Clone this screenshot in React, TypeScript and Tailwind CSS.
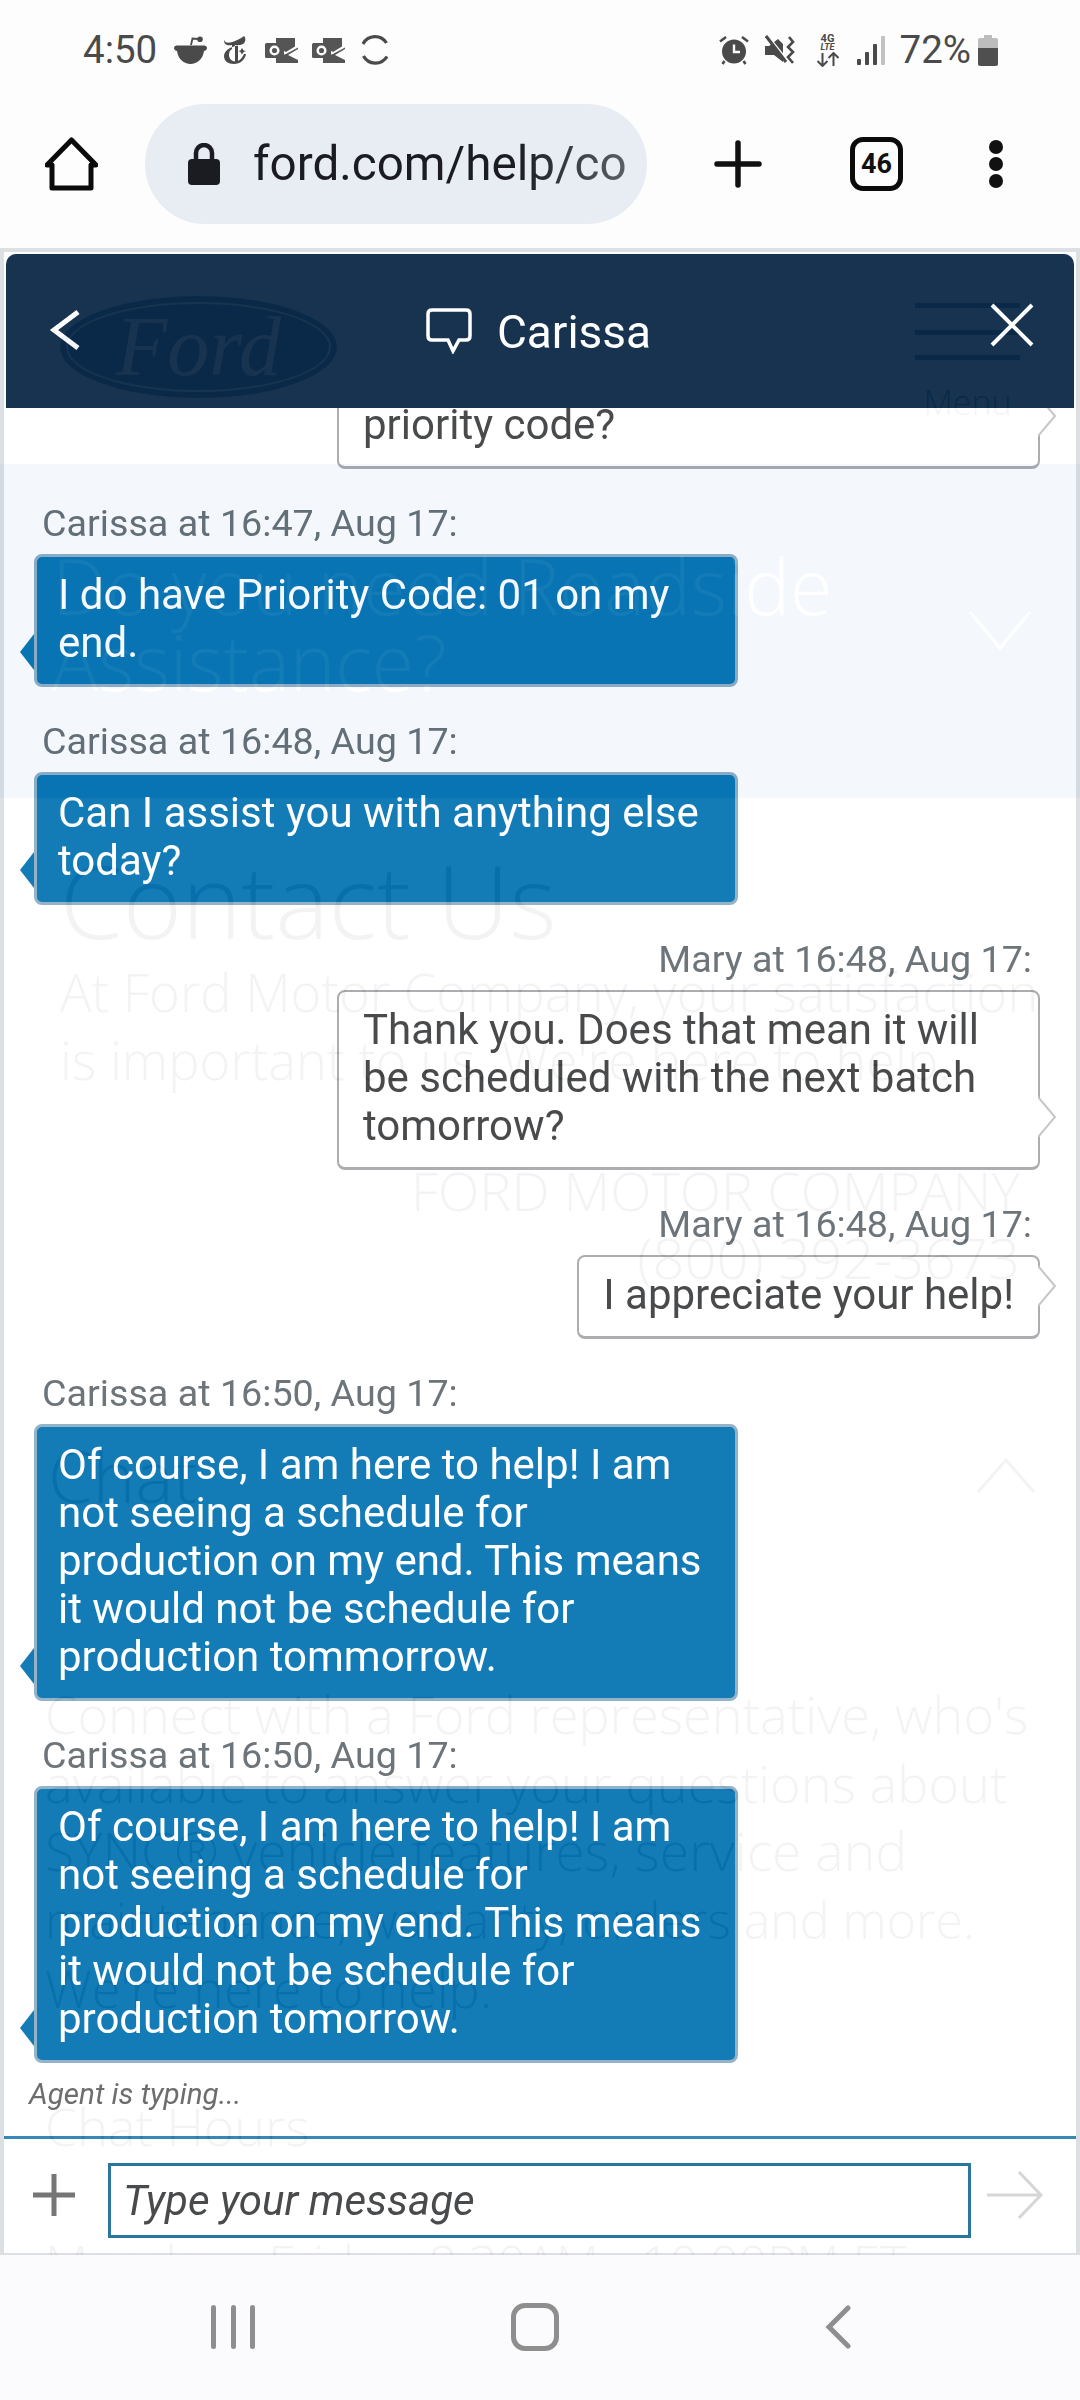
import React from "react";

const ROBOTO = "font-['Roboto',sans-serif]";
const GHOST = "font-['Open_Sans',sans-serif] font-light text-[#161616]";

type Message = { who?: string; time?: string; text: string; mine?: boolean };

const messages: Message[] = [
  { mine: true, text: "priority code?" },
  { who: "Carissa", time: "16:47", text: "I do have Priority Code: 01 on my end." },
  { who: "Carissa", time: "16:48", text: "Can I assist you with anything else today?" },
  { who: "Mary", time: "16:48", mine: true, text: "Thank you. Does that mean it will be scheduled with the next batch tomorrow?" },
  { who: "Mary", time: "16:48", mine: true, text: "I appreciate your help!" },
  { who: "Carissa", time: "16:50", text: "Of course, I am here to help! I am not seeing a schedule for production on my end. This means it would not be schedule for production tommorrow." },
  { who: "Carissa", time: "16:50", text: "Of course, I am here to help! I am not seeing a schedule for production on my end. This means it would not be schedule for production tomorrow." },
];

const ChatBubble = ({ msg }: { msg: Message }) => {
  if (msg.mine) {
    return (
      <div className="flex shrink-0 flex-col items-end">
        {msg.who && (
          <div className="pt-[33px] pb-[10px] pr-[8px] text-[37.700px] leading-[42px] text-[#666e73]">
            {msg.who} at {msg.time}, Aug 17:
          </div>
        )}
        <div className={`relative max-w-[703px] rounded-[8px] border-[2px] border-b-[3px] border-[#a9a9ad] bg-white px-[24px] pt-[14px] pb-[17px] text-[42px] leading-[48px] text-[#3f4143] ${msg.who ? "" : "w-[703px]"}`}>
          {msg.text}
          <svg className="absolute right-[-20px] bottom-[28px]" width="20" height="44" viewBox="0 0 20 44">
            <path d="M0 2 L17 22 L0 42" fill="#fff" stroke="#c4c4c6" strokeWidth="2" />
          </svg>
        </div>
      </div>
    );
  }
  return (
    <div className="flex shrink-0 flex-col items-start">
      <div className="pt-[33px] pb-[10px] pl-[8px] text-[37.700px] leading-[42px] text-[#666e73]">
        {msg.who} at {msg.time}, Aug 17:
      </div>
      <div className="relative max-w-[704px] rounded-[8px] border-[3px] border-[#8eafc6] bg-[#0774b3] px-[21px] pt-[14px] pb-[17px] text-[42px] leading-[48px] text-white">
        {msg.text}
        <svg className="absolute left-[-17px] bottom-[14px]" width="14" height="36" viewBox="0 0 14 36">
          <path d="M14 0 L0 18 L14 36 Z" fill="#0774b3" />
        </svg>
      </div>
    </div>
  );
};

const RedditIcon = () => (
  <svg width="35" height="28" viewBox="0 0 35 28" fill="#4a4a4a">
    <path d="M1 12 C1 10 3 9.500 5 9.500 L30 9.500 C32 9.500 34 10 34 12 C34 14 32 15 31 15 C30 23 24 28 17.500 28 C11 28 5 23 4 15 C3 15 1 14 1 12 Z" />
    <path d="M18 9 L19.500 2.500 L25 3" fill="none" stroke="#4a4a4a" strokeWidth="1.800" />
    <circle cx="27" cy="3.200" r="2.800" />
  </svg>
);

const NytIcon = () => (
  <svg width="24" height="28" viewBox="0 0 24 28" fill="#4a4a4a">
    <path d="M1 4 C3 8 7 7 12 5 C16 3 19 2 21 0 C23 2 23 6 20 8 C17 9.500 14 9 12 9 L12 10 L7 12 C3 14 1 17 1 20 C1 25 5 28 11 28 C17 28 22 24 23 18 L21 18 C19 22 17 24 15 25 L15 9.500 L12 10 L12 25.500 C8 25 6 22 6 19 C6 16 7 14 9 13 L9 9 C5 10 1 9 1 4 Z" />
    <path d="M19 12 l1.500 2.500 l2.500 .5 l-2.500 1 l-1.500 2.500 l-1.500 -2.500 l-2 -1 l2 -.5 Z" />
  </svg>
);

const OutlookIcon = () => (
  <svg width="33" height="25" viewBox="0 0 33 25">
    <path d="M11 0 H30 V8.500 L21 14 L11 8 Z" fill="#555" />
    <path d="M11 18 H14 L21 16 L33 9.500 V11 L23 17 L33 22 V25 H11 Z" fill="#555" />
    <rect x="0" y="5" width="19" height="15" rx="1.500" fill="#555" />
    <circle cx="9.500" cy="12.500" r="3.800" fill="none" stroke="#fdfdfe" strokeWidth="2.500" />
  </svg>
);

const SyncIcon = () => (
  <svg width="30" height="30" viewBox="0 0 30 30" fill="none" stroke="#4a4a4a" strokeWidth="3.200">
    <path d="M26.500 8 A13.500 13.500 0 0 0 3 9" />
    <path d="M3.500 21 A13.500 13.500 0 0 0 27 21.500" />
  </svg>
);

const AlarmIcon = () => (
  <svg width="30" height="30" viewBox="0 0 30 30">
    <circle cx="15" cy="16.500" r="12" fill="#4a4a4a" />
    <path d="M15 9.500 V17 H21" fill="none" stroke="#fdfdfe" strokeWidth="2.400" />
    <path d="M1 6.500 L7 2 M29 6.500 L23 2 M5.500 26 L3.500 29 M24.500 26 L26.500 29" stroke="#4a4a4a" strokeWidth="2.600" />
  </svg>
);

const MuteVibrateIcon = () => (
  <svg width="30" height="30" viewBox="0 0 30 30">
    <path d="M0 12 H4 L13 5 L18 10 V28 L9 21 H0 Z" fill="#4a4a4a" transform="translate(0 -1)" />
    <path d="M1 2 L21 27" stroke="#fdfdfe" strokeWidth="2" transform="translate(2 -1)" />
    <path d="M1 1 L21 27" stroke="#4a4a4a" strokeWidth="3" />
    <path d="M24 2 L28 7 L23 12 L28 17 L23 22 L28 28" fill="none" stroke="#4a4a4a" strokeWidth="2.600" />
  </svg>
);

const NetworkIcon = () => (
  <div className="flex w-[24px] flex-col items-center">
    <div className={`text-[11px] leading-[9px] font-bold text-[#4a4a4a] ${ROBOTO}`}>4G</div>
    <div className={`text-[9px] leading-[9px] font-bold italic text-[#4a4a4a] ${ROBOTO}`}>LTE</div>
    <svg width="24" height="15" viewBox="0 0 24 15" fill="none" stroke="#4a4a4a" strokeWidth="2">
      <path d="M6.500 1 V14 M1.500 9 L6.500 14 L11.500 9" />
      <path d="M17.500 14 V1 M12.500 6 L17.500 1 L22.500 6" />
    </svg>
  </div>
);

const SignalIcon = () => (
  <svg width="28" height="29" viewBox="0 0 28 29">
    <rect x="0" y="23" width="4" height="6" rx="1" fill="#4a4a4a" />
    <rect x="8" y="16" width="4" height="13" rx="1" fill="#4a4a4a" />
    <rect x="16" y="8" width="4" height="21" rx="1" fill="#4a4a4a" />
    <rect x="24" y="0" width="4" height="29" rx="1" fill="#c2c2c2" />
  </svg>
);

const BatteryIcon = () => (
  <svg width="20" height="31" viewBox="0 0 20 31">
    <path d="M6 0 H14 V3 H18 Q20 3 20 5 V13 H0 V5 Q0 3 2 3 H6 Z" fill="#bdbdbd" />
    <path d="M0 13 H20 V29 Q20 31 18 31 H2 Q0 31 0 29 Z" fill="#4f4f4f" />
  </svg>
);

const StatusBar = () => (
  <div className="flex h-[100px] items-center justify-between pl-[83px] pr-[82px] text-[#4a4a4a]">
    <div className="flex items-center">
      <span className="w-[90px] text-[38.500px] leading-[44px]">4:50</span>
      <div className="flex items-center gap-[15px]">
        <RedditIcon />
        <NytIcon />
        <div className="ml-[3px] flex items-center gap-[14px]">
          <OutlookIcon />
          <OutlookIcon />
        </div>
        <SyncIcon />
      </div>
    </div>
    <div className="flex items-center">
      <div className="flex items-center">
        <AlarmIcon />
        <div className="ml-[16px]"><MuteVibrateIcon /></div>
        <div className="ml-[21px]"><NetworkIcon /></div>
        <div className="ml-[17px]"><SignalIcon /></div>
      </div>
      <span className="ml-[15px] text-[38.500px] leading-[44px]">72%</span>
      <div className="ml-[7px]"><BatteryIcon /></div>
    </div>
  </div>
);

const Toolbar = () => (
  <div className="flex h-[148px] items-start pl-[45px] pt-[4px]">
    <svg className="mt-[33px]" width="53" height="54" viewBox="0 0 53 54" fill="none" stroke="#0b0b0b" strokeWidth="5" strokeLinejoin="round">
      <path d="M26.500 3 L51 28 H46 V51 H7 V28 H2 Z" />
    </svg>
    <div className="ml-[47px] flex h-[120px] w-[502px] items-center rounded-full bg-[#e8edf3] pl-[43px] pb-[1px]">
      <svg width="32" height="42" viewBox="0 0 32 42" fill="#1a1c22">
        <path d="M8 18 V10 A8 8 0 0 1 24 10 V18" fill="none" stroke="#1a1c22" strokeWidth="4.500" />
        <rect x="0" y="16" width="32" height="26" rx="4" />
      </svg>
      <div className="ml-[33px] w-[374px] overflow-hidden whitespace-nowrap bg-linear-to-r from-[#1a1c22] from-70% to-[#5a6068] bg-clip-text text-[47.600px] leading-[56px] text-transparent">
        ford.com/help/co
      </div>
    </div>
    <svg className="mt-[36px] ml-[67px]" width="48" height="48" viewBox="0 0 48 48" stroke="#111" strokeWidth="5.500" strokeLinecap="round">
      <path d="M24 3 V45 M3 24 H45" />
    </svg>
    <div className="mt-[33px] ml-[88px] flex h-[54px] w-[53px] items-center justify-center rounded-[13px] border-[5px] border-[#0b0b0b] text-[27px] leading-none font-bold text-[#111]">
      46
    </div>
    <div className="mt-[34px] ml-[86px] flex h-[52px] flex-col justify-between py-[2px]">
      <div className="h-[14px] w-[14px] rounded-full bg-[#111]" />
      <div className="h-[14px] w-[14px] rounded-full bg-[#111]" />
      <div className="h-[14px] w-[14px] rounded-full bg-[#111]" />
    </div>
  </div>
);

// page behind the chat, it shows through the 95% opaque widget
const PageBehind = () => (
  <div className={`absolute inset-0 overflow-hidden bg-white ${GHOST}`}>
    <div className="flex h-[216px] items-start justify-between px-[60px] pt-[48px]">
      <div className="flex h-[102px] w-[277px] items-center justify-center rounded-[50%] bg-[#003478] p-[6px]">
        <div className="flex h-full w-full items-center justify-center rounded-[50%] border-[2px] border-white">
          <span className="font-['Liberation_Serif',serif] text-[84px] leading-none font-normal text-white italic">Ford</span>
        </div>
      </div>
      <div className="flex flex-col items-center pt-[7px]">
        <div className="h-[5px] w-[105px] bg-[#003478]" />
        <div className="mt-[22px] h-[5px] w-[105px] bg-[#003478]" />
        <div className="mt-[20px] h-[5px] w-[105px] bg-[#003478]" />
        <div className="mt-[24px] text-[34px] leading-[36px] text-[#003478]">Menu</div>
      </div>
    </div>
    <div className="relative h-[334px] bg-[#3787d7] pl-[52px] pt-[84px] text-[77px] leading-[76px] text-white">
      <div>Do you need Roadside</div>
      <div>Assistance?</div>
      <svg className="absolute top-[146px] right-[48px]" width="64" height="40" viewBox="0 0 64 40" fill="none" stroke="#fff" strokeWidth="3">
        <path d="M2 2 L32 38 L62 2" />
      </svg>
    </div>
    <div className="pl-[60px] pr-[60px]">
      <div className="mt-[42px] text-[101px] leading-[120px]">Contact Us</div>
      <div className="mt-[-2px] whitespace-nowrap text-[52.500px] leading-[68px]">At Ford Motor Company, your satisfaction</div>
      <div className="text-[52.500px] leading-[68px]">is important to us. We're here to help.</div>
      <div className="mt-[66px] text-right text-[54px] leading-[60px] whitespace-nowrap">FORD MOTOR COMPANY</div>
      <div className="mt-[3px] text-right text-[56px] leading-[68px]">(800) 392-3673</div>
    </div>
    <div className="relative mt-[149px] pl-[48px] text-[72px] leading-[70px]">
      Chat
      <svg className="absolute top-[18px] right-[44px]" width="60" height="36" viewBox="0 0 60 36" fill="none" stroke="#161616" strokeWidth="3">
        <path d="M2 34 L30 2 L58 34" />
      </svg>
    </div>
    <div className="mt-[170px] pl-[45px] text-[52.300px] leading-[68.500px] whitespace-nowrap">
      <div>Connect with a Ford representative, who's</div>
      <div>available to answer your questions about</div>
      <div className="text-[53.500px]">SYNC® vehicle features, service and</div>
      <div className="text-[50px]">maintenance, warranty, orders and more.</div>
      <div>We're here to help.</div>
    </div>
    <div className="mt-[69px] pl-[45px] text-[52px] leading-[68px]">Chat Hours</div>
    <div className="mt-[69px] pl-[45px] text-[50px] leading-[68px] whitespace-nowrap">Monday - Friday: 8:30AM - 10:00PM ET</div>
  </div>
);

const ChatHeader = () => (
  <div className="mx-[2px] mt-[2px] flex h-[154px] shrink-0 items-center justify-between rounded-t-[10px] bg-[#0b2946] pl-[42px] pr-[40px]">
    <svg className="mt-[-2px]" width="35" height="42" viewBox="0 0 35 42" fill="none" stroke="#fff" strokeWidth="5">
      <path d="M30 3 L6 21 L30 39" />
    </svg>
    <div className="ml-[4px] flex items-center">
      <svg width="46" height="46" viewBox="0 0 46 46" fill="none" stroke="#fff" strokeWidth="3.500">
        <path d="M6 2 H40 Q44 2 44 6 V28 Q44 32 40 32 H33 L27 43 L22 32 H6 Q2 32 2 28 V6 Q2 2 6 2 Z" />
      </svg>
      <span className="mt-[2px] ml-[25px] text-[46px] leading-[52px] text-white">Carissa</span>
    </div>
    <svg className="mt-[-12px]" width="44" height="44" viewBox="0 0 44 44" fill="none" stroke="#fff" strokeWidth="4">
      <path d="M2 2 L42 42 M42 2 L2 42" />
    </svg>
  </div>
);

const ChatInput = () => (
  <div className="flex h-[117px] shrink-0 items-center border-t-[3px] border-[#2b84b5] bg-white pl-[29px] pt-[9px]">
    <svg className="-mt-[12px]" width="42" height="42" viewBox="0 0 42 42" stroke="#6f6f6f" strokeWidth="5">
      <path d="M21 0 V42 M0 21 H42" />
    </svg>
    <div className="ml-[33px] flex h-[75px] w-[863px] items-center border-[3px] border-[#1f6f99] pl-[12px] text-[42px] italic text-[#3f4143]">
      Type your message
    </div>
    <svg className="-mt-[12px] ml-[16px]" width="56" height="50" viewBox="0 0 56 50" fill="none" stroke="#d4d4d4" strokeWidth="3">
      <path d="M0 25 H54 M32 2 L54 25 L32 48" />
    </svg>
  </div>
);

const BottomNav = () => (
  <div className="flex h-[145px] items-start bg-[#fbfbfe] pl-[211px] pt-[50px]">
    <div className="flex h-[44px] w-[44px] justify-between">
      <div className="h-full w-[5px] rounded-full bg-[#8e8e8e]" />
      <div className="h-full w-[5px] rounded-full bg-[#8e8e8e]" />
      <div className="h-full w-[5px] rounded-full bg-[#8e8e8e]" />
    </div>
    <div className="ml-[256px] -mt-[2px] h-[48px] w-[48px] rounded-[14px] border-[5px] border-[#8e8e8e]" />
    <svg className="ml-[266px]" width="26" height="44" viewBox="0 0 26 44" fill="none" stroke="#8e8e8e" strokeWidth="5" strokeLinecap="round">
      <path d="M23 3 L4 22 L23 41" />
    </svg>
  </div>
);

const App: React.FC = () => {
  return (
    <div className={`flex h-[2400px] w-[1080px] flex-col overflow-hidden bg-[#fdfdfe] ${ROBOTO}`}>
      <StatusBar />
      <Toolbar />
      <div className="relative h-[2007px] shrink-0 overflow-hidden">
        <PageBehind />
        <div className="relative flex h-full flex-col border-x-[4px] border-t-[4px] border-b-[2px] border-[#dcdfe2] bg-white opacity-95">
          <ChatHeader />
          <div className="flex min-h-0 flex-1 flex-col justify-end overflow-hidden pl-[30px] pr-[36px]">
            {messages.map((msg, i) => (
              <ChatBubble key={i} msg={msg} />
            ))}
          </div>
          <div className="h-[73px] shrink-0 pl-[25px] pt-[11px] text-[29.600px] leading-[40px] text-[#666] italic">
            Agent is typing...
          </div>
          <ChatInput />
        </div>
      </div>
      <BottomNav />
    </div>
  );
};

export default App;
